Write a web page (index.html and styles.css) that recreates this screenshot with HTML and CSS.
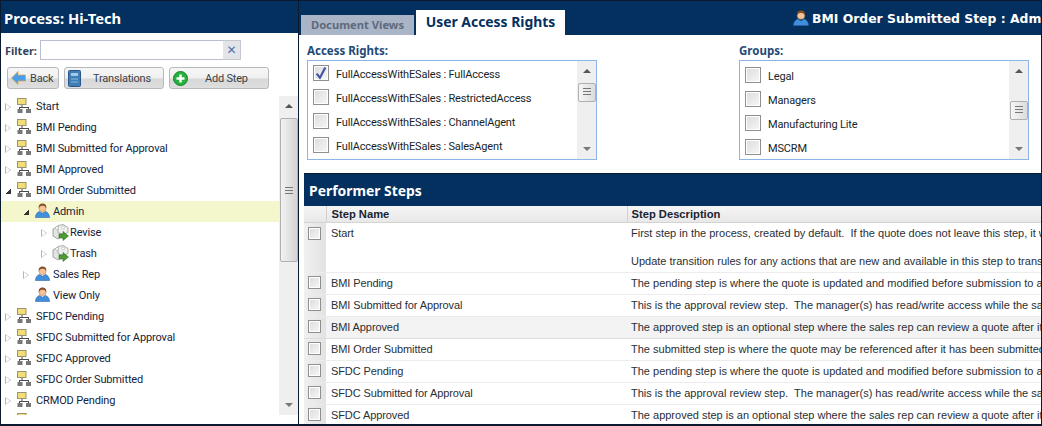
FILE: index.html
```html
<!DOCTYPE html>
<html lang="en">
<head>
<meta charset="utf-8">
<title>Process: Hi-Tech</title>
<link rel="stylesheet" href="styles.css">
</head>
<body>
<svg class="defs" width="0" height="0" aria-hidden="true">
  <symbol id="i-step" viewBox="0 0 14 15">
    <rect x="0.500" y="0.500" width="8.500" height="6" fill="#f2de78" stroke="#9c9470"/>
    <path d="M5 7v3M2.500 9.500h9M2.500 9v2M11.500 9v2" stroke="#4a4a4a" fill="none"/>
    <rect x="0.500" y="11" width="5" height="4" fill="#777"/>
    <rect x="9" y="11" width="5" height="4" fill="#777"/>
  </symbol>
  <symbol id="i-user" viewBox="0 0 16 16">
    <path d="M0.500 15.500c0-4 2.500-6 4.500-6.500l3 2 3-2c2 .5 4.500 2.500 4.500 6.500z" fill="#3f8fdc" stroke="#2a629e" stroke-width=".6"/>
    <circle cx="8" cy="5.500" r="3.800" fill="#f3c49c" stroke="#b5764a" stroke-width=".5"/>
    <path d="M4 5.500C3.600 1.500 6 .5 8 .5s4.500 1 4 5C11 3.500 9.500 3 8 3S5 3.500 4 5.500z" fill="#8a4f23"/>
  </symbol>
  <symbol id="i-action" viewBox="0 0 17 17">
    <path d="M1 5l5-3 5 2 0 8-5 3-5-3z" fill="#e3e5e3" stroke="#8e928e" stroke-width=".8"/>
    <path d="M6 1.500l5-1 5 3v5l-5 2-5-2z" fill="#eef0ee" stroke="#989c98" stroke-width=".8"/>
    <circle cx="5" cy="4" r="1.500" fill="#fff" stroke="#a0a4a0" stroke-width=".5"/>
    <circle cx="11" cy="3.500" r="1.500" fill="#fff" stroke="#a0a4a0" stroke-width=".5"/>
    <path d="M7 10h4V7.500l5.500 4.500L11 16.500V14H7z" fill="#4f9a35" stroke="#2f6f20" stroke-width=".6"/>
  </symbol>
  <symbol id="i-back" viewBox="0 0 15 14">
    <path d="M7 0.500v3.500h7.500v6H7v3.500L0.500 7z" fill="#4a9fea" stroke="#e8a23a" stroke-width=".7"/>
  </symbol>
  <symbol id="i-book" viewBox="0 0 13 17">
    <rect x="0.500" y="0.500" width="12" height="16" rx="1" fill="#3f7fb8" stroke="#2a5686"/>
    <rect x="3" y="3" width="7" height="3" fill="#a5c8e6"/>
    <path d="M3 9h7M3 12h7" stroke="#8ab4d8"/>
  </symbol>
  <symbol id="i-add" viewBox="0 0 15 15">
    <circle cx="7.500" cy="7.500" r="7" fill="#24b03a" stroke="#1a8228"/>
    <path d="M7.500 3.500v8M3.500 7.500h8" stroke="#fff" stroke-width="2.400"/>
  </symbol>
  <symbol id="i-check" viewBox="0 0 13 13">
    <path d="M2.500 7l3 4L10.500 1.500" fill="none" stroke="#3f54a6" stroke-width="2"/>
  </symbol>
</svg>

<div class="app">
  <aside class="side">
    <header class="side-head">Process: Hi-Tech</header>
    <div class="filter">
      <label class="filter-label" for="filter">Filter:</label>
      <input class="filter-input" id="filter" type="text">
      <span class="filter-clear">✕</span>
    </div>
    <div class="toolbar">
      <span class="btn btn-back"><svg class="btn-ic ic-back"><use href="#i-back"/></svg>Back</span>
      <span class="btn btn-trans"><svg class="btn-ic ic-book"><use href="#i-book"/></svg>Translations</span>
      <span class="btn btn-add"><svg class="btn-ic ic-add"><use href="#i-add"/></svg>Add Step</span>
    </div>
    <div class="tree-wrap">
      <ul class="tree">
        <li class="node"><i class="tw"></i><svg class="ic-step"><use href="#i-step"/></svg>Start</li>
        <li class="node"><i class="tw"></i><svg class="ic-step"><use href="#i-step"/></svg>BMI Pending</li>
        <li class="node"><i class="tw"></i><svg class="ic-step"><use href="#i-step"/></svg>BMI Submitted for Approval</li>
        <li class="node"><i class="tw"></i><svg class="ic-step"><use href="#i-step"/></svg>BMI Approved</li>
        <li class="node"><i class="tw open"></i><svg class="ic-step"><use href="#i-step"/></svg>BMI Order Submitted</li>
        <li class="node lv1 selected"><i class="tw open"></i><svg class="ic-user"><use href="#i-user"/></svg>Admin</li>
        <li class="node lv2"><i class="tw"></i><svg class="ic-action"><use href="#i-action"/></svg>Revise</li>
        <li class="node lv2"><i class="tw"></i><svg class="ic-action"><use href="#i-action"/></svg>Trash</li>
        <li class="node lv1"><i class="tw"></i><svg class="ic-user"><use href="#i-user"/></svg>Sales Rep</li>
        <li class="node lv1"><i class="tw none"></i><svg class="ic-user"><use href="#i-user"/></svg>View Only</li>
        <li class="node"><i class="tw"></i><svg class="ic-step"><use href="#i-step"/></svg>SFDC Pending</li>
        <li class="node"><i class="tw"></i><svg class="ic-step"><use href="#i-step"/></svg>SFDC Submitted for Approval</li>
        <li class="node"><i class="tw"></i><svg class="ic-step"><use href="#i-step"/></svg>SFDC Approved</li>
        <li class="node"><i class="tw"></i><svg class="ic-step"><use href="#i-step"/></svg>SFDC Order Submitted</li>
        <li class="node"><i class="tw"></i><svg class="ic-step"><use href="#i-step"/></svg>CRMOD Pending</li>
        <li class="node"><i class="tw none"></i><svg class="ic-step"><use href="#i-step"/></svg></li>
      </ul>
      <div class="sb sb-tree">
        <i class="arr up"></i>
        <span class="thumb"></span>
        <i class="arr down"></i>
      </div>
    </div>
  </aside>

  <main class="main">
    <header class="main-head">
      <nav class="tabs">
        <span class="tab">Document Views</span>
        <span class="tab active">User Access Rights</span>
      </nav>
      <div class="crumb"><svg class="ic-crumb"><use href="#i-user"/></svg>BMI Order Submitted Step : Admin</div>
    </header>

    <section class="rights">
      <div class="pick">
        <h3 class="pick-label">Access Rights:</h3>
        <div class="pick-box">
          <ul class="pick-list">
            <li class="pick-row"><span class="cb"><svg class="tick"><use href="#i-check"/></svg></span>FullAccessWithESales : FullAccess</li>
            <li class="pick-row"><span class="cb"></span>FullAccessWithESales : RestrictedAccess</li>
            <li class="pick-row"><span class="cb"></span>FullAccessWithESales : ChannelAgent</li>
            <li class="pick-row"><span class="cb"></span>FullAccessWithESales : SalesAgent</li>
          </ul>
          <div class="sb sb-access"><i class="arr up"></i><span class="thumb"></span><i class="arr down"></i></div>
        </div>
      </div>
      <div class="pick">
        <h3 class="pick-label">Groups:</h3>
        <div class="pick-box">
          <ul class="pick-list groups">
            <li class="pick-row"><span class="cb"></span>Legal</li>
            <li class="pick-row"><span class="cb"></span>Managers</li>
            <li class="pick-row"><span class="cb"></span>Manufacturing Lite</li>
            <li class="pick-row"><span class="cb"></span>MSCRM</li>
          </ul>
          <div class="sb sb-groups"><i class="arr up"></i><span class="thumb"></span><i class="arr down"></i></div>
        </div>
      </div>
    </section>

    <section class="steps">
      <h2 class="steps-title">Performer Steps</h2>
      <table class="grid">
        <colgroup><col class="c-check"><col class="c-name"><col class="c-desc"></colgroup>
        <thead>
          <tr><th class="chk"></th><th class="th-name">Step Name</th><th>Step Description</th></tr>
        </thead>
        <tbody>
          <tr><td class="chk"><span class="cb small"></span></td><td class="name">Start</td><td class="desc">First step in the process, created by default.  If the quote does not leave this step, it will
 
Update transition rules for any actions that are new and available in this step to transition</td></tr>
          <tr><td class="chk"><span class="cb small"></span></td><td class="name">BMI Pending</td><td class="desc">The pending step is where the quote is updated and modified before submission to an</td></tr>
          <tr><td class="chk"><span class="cb small"></span></td><td class="name">BMI Submitted for Approval</td><td class="desc">This is the approval review step.  The manager(s) has read/write access while the sales</td></tr>
          <tr class="hover"><td class="chk"><span class="cb small"></span></td><td class="name">BMI Approved</td><td class="desc">The approved step is an optional step where the sales rep can review a quote after it</td></tr>
          <tr><td class="chk"><span class="cb small"></span></td><td class="name">BMI Order Submitted</td><td class="desc">The submitted step is where the quote may be referenced after it has been submitted</td></tr>
          <tr><td class="chk"><span class="cb small"></span></td><td class="name">SFDC Pending</td><td class="desc">The pending step is where the quote is updated and modified before submission to an</td></tr>
          <tr><td class="chk"><span class="cb small"></span></td><td class="name">SFDC Submitted for Approval</td><td class="desc">This is the approval review step.  The manager(s) has read/write access while the sales</td></tr>
          <tr><td class="chk"><span class="cb small"></span></td><td class="name">SFDC Approved</td><td class="desc">The approved step is an optional step where the sales rep can review a quote after it</td></tr>
        </tbody>
      </table>
    </section>
  </main>
</div>
</body>
</html>
```
FILE: styles.css
```css
* { box-sizing: border-box; }
html, body { margin: 0; height: 100%; overflow: hidden; }
body { background: #0b1a2e; font-family: "Roboto", "Liberation Sans", sans-serif; color: #1d2a3a; }
ul { list-style: none; margin: 0; padding: 0; }
h2, h3 { margin: 0; }
.defs { position: absolute; }

.app { display: flex; gap: 1px; width: 1042px; height: 426px; padding: 1px 1px 2px 1px; }

/* left panel */
.side { width: 297px; flex: none; background: #fff; display: flex; flex-direction: column; overflow: hidden; }
.side-head { height: 32px; flex: none; background: #03305f; color: #fff; font: bold 14.750px/34px "Noto Sans", sans-serif; padding-left: 3px; }
.filter { display: flex; align-items: center; height: 20px; margin-top: 7px; flex: none; }
.filter-label { width: 39px; padding-left: 4px; font: bold 11px "Noto Sans", sans-serif; color: #33435a; }
.filter-input { width: 183px; height: 20px; border: 1px solid #b9bfd0; border-right: 0; padding: 0; background: #fff; }
.filter-clear { width: 18px; height: 20px; background: #e2e4e8; border: 1px solid #c4c8d0; border-left: 0; color: #4f74ad; font: bold 12px/18px "DejaVu Sans", sans-serif; text-align: center; }
.toolbar { display: flex; height: 22px; margin-top: 7px; padding-left: 6px; flex: none; }
.btn { display: flex; align-items: center; height: 22px; border: 1px solid #b6babd; border-radius: 3px; background: linear-gradient(#f6f6f6 0, #f0f0f0 50%, #d8d8d8 55%, #dedede 100%); font-size: 11px; letter-spacing: -.2px; color: #3c3f44; }
.btn-ic { flex: none; }
.btn-back { width: 52px; padding-left: 3px; }
.btn-trans { width: 100px; margin-left: 5px; padding-left: 3px; }
.btn-add { width: 100px; margin-left: 5px; padding-left: 3px; }
.ic-back { width: 15px; height: 14px; margin-right: 4px; }
.ic-book { width: 13px; height: 17px; margin-right: 12px; }
.ic-add { width: 15px; height: 15px; margin-right: 17px; }

.tree-wrap { display: flex; height: 319px; margin-top: 7px; flex: none; }
.tree { flex: 1; min-width: 0; overflow: hidden; }
.node { display: flex; align-items: center; height: 21px; padding-left: 4px; font-size: 11px; letter-spacing: -.13px; color: #14233a; white-space: nowrap; }
.node.lv1 { padding-left: 22px; }
.node.lv2 { padding-left: 40px; }
.selected { background: #f4f6cb; }
.tw { position: relative; width: 0; height: 0; margin-right: 6px; border-left: 6px solid #b4b4b4; border-top: 4.500px solid transparent; border-bottom: 4.500px solid transparent; flex: none; }
.tw::after { content: ""; position: absolute; left: -5px; top: -3px; border-left: 4px solid #fff; border-top: 3px solid transparent; border-bottom: 3px solid transparent; }
.tw.open { border: 0; width: 6px; height: 6px; background: linear-gradient(135deg, transparent 50%, #333 50%); }
.tw.open::after, .tw.none::after { display: none; }
.tw.none { border-color: transparent; }
.lv2 .tw { margin-right: 5px; }
.ic-step { width: 14px; height: 15px; margin: 0 5px 3px 0; flex: none; }
.ic-user { width: 15px; height: 15px; margin: 0 3px 2px 0; flex: none; }
.ic-action { width: 17px; height: 17px; margin: 0 1px 1px 0; flex: none; }

/* scrollbars */
.sb { width: 19px; flex: none; background: #efefef; display: flex; flex-direction: column; align-items: center; position: relative; }
.arr { width: 0; height: 0; border-left: 4px solid transparent; border-right: 4px solid transparent; flex: none; }
.arr.up { border-bottom: 4px solid #555; margin-top: 8px; }
.arr.down { border-top: 4px solid #777; margin-top: auto; margin-bottom: 8px; }
.thumb { width: 18px; border: 1px solid #aeb0b2; border-radius: 2px; flex: none; background: linear-gradient(90deg, #f2f2f2, #dcdcdc); }
.sb-tree .thumb { height: 144px; margin-top: 10px; background: linear-gradient(#777, #777) center 68px / 8px 1px no-repeat, linear-gradient(#777, #777) center 71px / 8px 1px no-repeat, linear-gradient(#777, #777) center 74px / 8px 1px no-repeat, linear-gradient(90deg, #f2f2f2, #d4d4d4); }
.sb-access .thumb, .sb-groups .thumb { height: 19px; background: linear-gradient(#777, #777) center 4px / 8px 1px no-repeat, linear-gradient(#777, #777) center 7px / 8px 1px no-repeat, linear-gradient(#777, #777) center 10px / 8px 1px no-repeat, linear-gradient(90deg, #f6f6f6, #dcdcdc); }
.sb-access .thumb { margin-top: 10px; }
.sb-groups .thumb { margin-top: 28px; }

/* right panel */
.main { flex: 1; min-width: 0; background: #fff; display: flex; flex-direction: column; overflow: hidden; }
.main-head { height: 34px; flex: none; background: #03305f; display: flex; justify-content: space-between; align-items: flex-start; white-space: nowrap; }
.tabs { display: flex; align-items: flex-end; height: 34px; padding-left: 2px; gap: 2px; }
.tab { height: 20px; width: 113px; background: #a9b4c6; color: #5d6a7c; font: bold 11.200px/20px "Noto Sans", sans-serif; text-align: center; }
.tab.active { height: 25px; width: 149px; background: #fff; color: #03305f; font: bold 13.900px/23px "Noto Sans", sans-serif; }
.crumb { display: flex; align-items: center; height: 34px; margin-left: 228px; flex: none; color: #fff; font: bold 12.400px "DejaVu Sans", sans-serif; overflow: hidden; }
.ic-crumb { width: 16px; height: 16px; margin-right: 3px; flex: none; }

.rights { height: 138px; flex: none; display: flex; gap: 142px; padding: 9px 0 0 8px; }
.pick { width: 290px; flex: none; }
.pick-label { font: bold 11.500px/13px "Noto Sans", sans-serif; color: #1f4a78; height: 16px; }
.pick-box { display: flex; height: 100px; border: 1px solid #8fb5e8; }
.pick-list { flex: 1; min-width: 0; padding: 1px 0 0 5px; overflow: hidden; }
.pick-list.groups { padding-top: 3px; }
.pick-row { display: flex; align-items: center; height: 24px; font-size: 11px; letter-spacing: -.17px; color: #1a1f28; white-space: nowrap; }
.cb { display: inline-block; position: relative; width: 16px; height: 16px; margin: 0 7px 3px 0; flex: none; border: 1px solid #8f8f8f; background: linear-gradient(135deg, #dcdcdc, #f7f7f7); box-shadow: inset 0 0 0 1px #fff; }
.cb.small { width: 13px; height: 13px; margin: 0; }
.tick { position: absolute; left: 0; top: 0; width: 14px; height: 14px; }

.steps { flex: 1; min-height: 0; margin-left: 5px; overflow: hidden; }
.steps-title { height: 33px; background: #03305f; border-top: 1px solid #0b1a2e; color: #fff; font: bold 13.900px/33px "Noto Sans", sans-serif; padding-left: 5px; }
.grid { width: 737px; table-layout: fixed; border-collapse: collapse; font: 11px "Liberation Sans", sans-serif; color: #2a2f36; }
.c-check { width: 22px; }
.c-name { width: 301px; }
.grid th { height: 16px; padding: 0 4px; text-align: left; font-size: 11.200px; font-weight: bold; color: #1a2230; background: linear-gradient(#f4f4f4, #e8e8e8); border-bottom: 1px solid #d4d4d4; border-left: 1px solid #d0d0d0; }
.grid th.chk { border-left: 0; }
.grid th.th-name { padding-left: 5px; }
.grid td { height: 22px; padding: 0 5px; border-bottom: 1px solid #ececec; white-space: pre; overflow: hidden; vertical-align: middle; }
.grid td.name { padding-left: 5px; letter-spacing: -.1px; }
.grid td.desc { padding-left: 4px; line-height: 14px; }
.grid tbody tr:first-child td { vertical-align: top; padding-top: 3px; height: 50px; line-height: 14px; }
.grid td.chk { padding: 0 0 0 4px; background: linear-gradient(90deg, #f0f0f0, #e2e2e2); }
.grid tbody tr:first-child td.chk { padding-top: 4px; }
.hover td { background: #f3f3f3; border-top: 1px solid #dcdcdc; border-bottom: 1px solid #dcdcdc; }
```
